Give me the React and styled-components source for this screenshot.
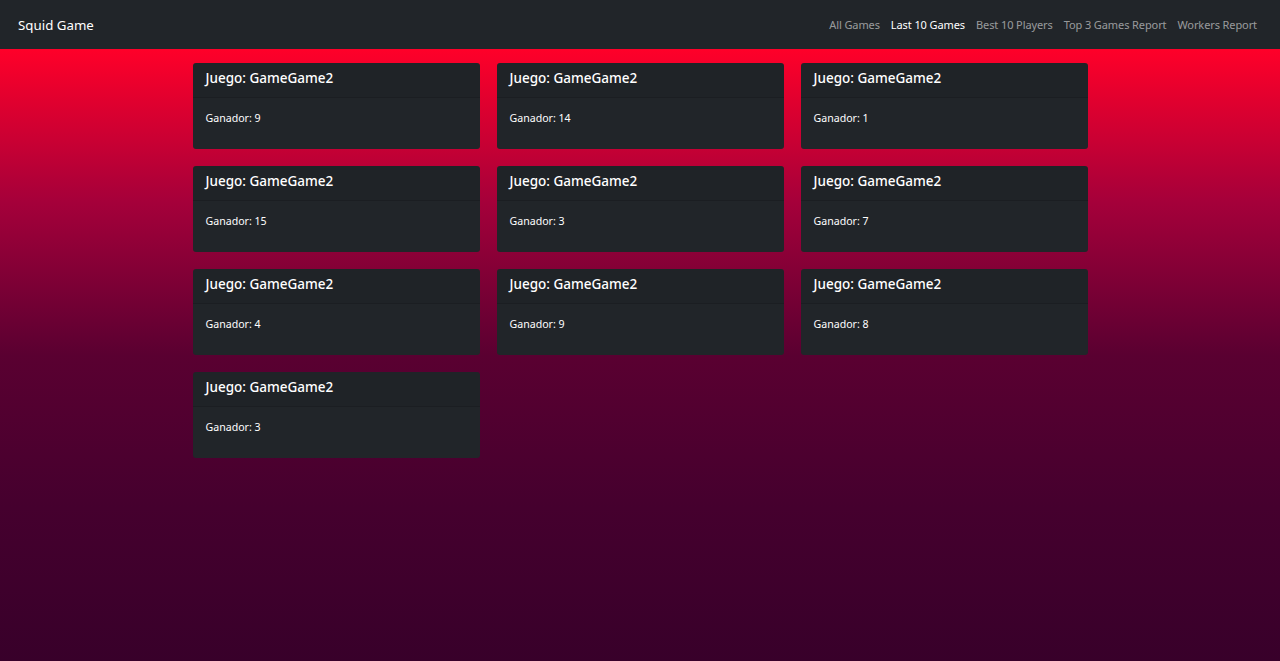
import React from 'react';
import styled, { createGlobalStyle } from 'styled-components';

const GlobalStyle = createGlobalStyle`
  body {
    margin: 0;
    font-family: "Noto Sans", "Open Sans", sans-serif;
    background: #380029;
  }
`

const Navbar = styled.nav`
  height: 49px;
  background-color: #212529;
  display: flex;
  align-items: center;
  justify-content: space-between;
  padding: 0 23px 0 18px;
`

const Brand = styled.a`
  color: #fff;
  font-size: 13.3px;
  text-decoration: none;
`

const NavLinks = styled.div`
  display: flex;
  gap: 11px;
`

const NavLink = styled.a`
  font-size: 11px;
  letter-spacing: -0.1px;
  text-decoration: none;
  color: ${props => props.active ? '#fff' : 'rgba(255, 255, 255, 0.55)'};
`

const Main = styled.main`
  min-height: calc(100vh - 49px);
  background: linear-gradient(
    to bottom,
    #ff0029 0%,
    #a5003a 25%,
    #5a0031 50%,
    #45002e 75%,
    #38002a 100%
  );
  padding-top: 14px;
  box-sizing: border-box;
`

const Grid = styled.div`
  width: 895px;
  margin: 0 auto;
  display: grid;
  grid-template-columns: repeat(3, 287px);
  column-gap: 17px;
  row-gap: 17px;
`

const Card = styled.div`
  background-color: #212529;
  border-radius: 3px;
  height: 86px;
  overflow: hidden;
  color: #fff;
`

const CardHeader = styled.div`
  height: 35px;
  box-sizing: border-box;
  padding: 5px 13px 0;
  background-color: rgba(0, 0, 0, 0.03);
  border-bottom: 1px solid rgba(0, 0, 0, 0.125);
  font-size: 13.5px;
  line-height: 20px;
  font-weight: 500;
`

const CardBody = styled.div`
  padding: 11px 13px;
  font-size: 10.6px;
  line-height: 18px;
`

const winners = [9, 14, 1, 15, 3, 7, 4, 9, 8, 3];
const links = ['All Games', 'Last 10 Games', 'Best 10 Players', 'Top 3 Games Report', 'Workers Report'];

export default function App() {
  return (
    <>
      <GlobalStyle />
      <Navbar>
        <Brand href="#">Squid Game</Brand>
        <NavLinks>
          {links.map(l => (
            <NavLink key={l} href="#" active={l === 'Last 10 Games' ? 1 : 0}>{l}</NavLink>
          ))}
        </NavLinks>
      </Navbar>
      <Main>
        <Grid>
          {winners.map((w, i) => (
            <Card key={i}>
              <CardHeader>Juego: GameGame2</CardHeader>
              <CardBody>Ganador: {w}</CardBody>
            </Card>
          ))}
        </Grid>
      </Main>
    </>
  )
}
